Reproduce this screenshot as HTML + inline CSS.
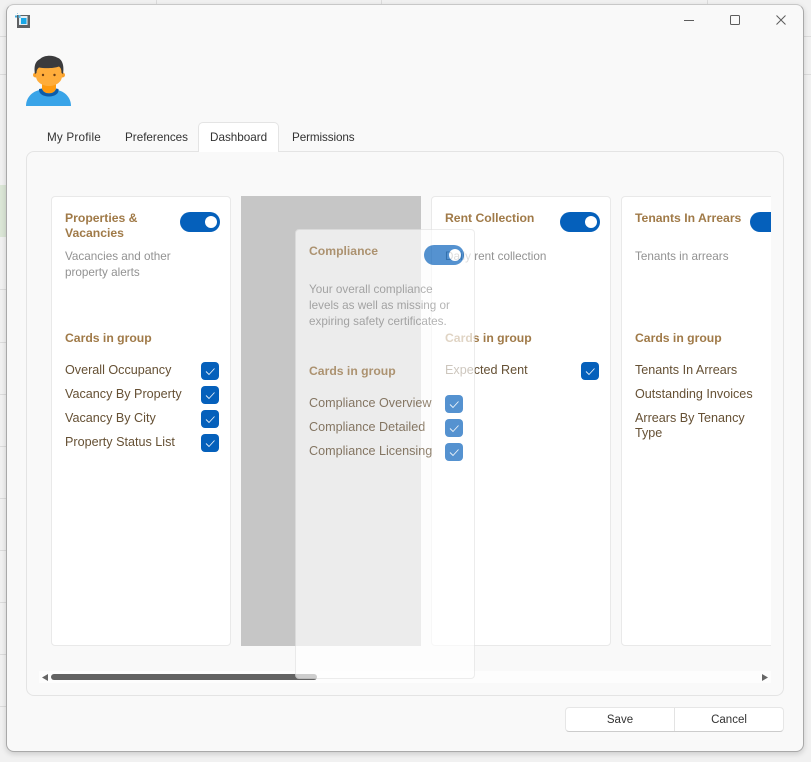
<!DOCTYPE html>
<html><head><meta charset="utf-8"><style>
*{box-sizing:border-box}
html,body{margin:0;padding:0}
body{width:811px;height:762px;overflow:hidden;position:relative;background:#f1f1f1;font-family:"Liberation Sans",sans-serif;font-size:12.5px}
.a{position:absolute}
.t{position:absolute;white-space:nowrap;line-height:16px}
.line{position:absolute;background:#dcdcdc}
#win{position:absolute;left:6px;top:4px;width:798px;height:748px;background:#f9f9f9;border:1px solid #a9a9a9;border-top-color:#c8c8c8;border-radius:8px;box-shadow:0 2px 6px rgba(0,0,0,.16)}
#panel{position:absolute;left:26px;top:151px;width:758px;height:545px;border:1px solid #e4e4e4;border-radius:8px;background:#f9f9f9}
.tab{color:#333;font-size:11.7px}
.card{position:absolute;top:196px;width:180px;height:450px;background:#fff;border:1px solid #e9e9e9;border-radius:4px}
.h{color:#a07a48;font-weight:bold;font-size:12.2px;line-height:15px}
.d{color:#929292;font-size:11.7px}
.i{color:#655034;font-size:12.6px}
.tg{position:absolute;width:40px;height:20px;border-radius:10px;background:#0560bb}
.tg:after{content:"";position:absolute;right:3px;top:4px;width:12px;height:12px;border-radius:50%;background:#fff}
.c{position:absolute;width:18px;height:18px;border-radius:4px;background:#0560bb}
.c svg{position:absolute;left:0;top:0}
.c path{stroke:rgba(255,255,255,.9);stroke-width:.9}
</style></head><body>
<div class="line" style="left:156px;top:0;width:1px;height:4px"></div>
<div class="line" style="left:381px;top:0;width:1px;height:4px"></div>
<div class="line" style="left:707px;top:0;width:1px;height:4px"></div>
<div class="line" style="left:0;top:36px;width:6px;height:1px"></div>
<div class="line" style="left:0;top:74px;width:6px;height:1px"></div>
<div class="line" style="left:804px;top:36px;width:7px;height:1px"></div>
<div class="line" style="left:804px;top:74px;width:7px;height:1px"></div>
<div class="a" style="left:0;top:185px;width:6px;height:52px;background:#dbe6d6"></div>
<div class="line" style="left:0;top:289px;width:6px;height:1px"></div>
<div class="line" style="left:0;top:342px;width:6px;height:1px"></div>
<div class="line" style="left:0;top:394px;width:6px;height:1px"></div>
<div class="line" style="left:0;top:446px;width:6px;height:1px"></div>
<div class="line" style="left:0;top:498px;width:6px;height:1px"></div>
<div class="line" style="left:0;top:550px;width:6px;height:1px"></div>
<div class="line" style="left:0;top:602px;width:6px;height:1px"></div>
<div class="line" style="left:0;top:654px;width:6px;height:1px"></div>
<div class="line" style="left:0;top:706px;width:6px;height:1px"></div>
<div id="win"></div>

<svg class="a" style="left:14px;top:12px" width="18" height="18" viewBox="0 0 18 18">
<rect x="3" y="3" width="13" height="13" fill="#5f6163"/><rect x="5" y="4" width="8.500" height="9" fill="#e4eef3"/><rect x="7" y="6" width="5.500" height="6" fill="#19a7e6"/><rect x="1" y="3.500" width="2" height="2" fill="#3fa9dc"/><rect x="3" y="1" width="1" height="1" fill="#9ccbe3"/><rect x="4.500" y="3" width="2" height="3" fill="#5fbde8"/>
</svg>
<svg class="a" style="left:680px;top:10px" width="110" height="20" viewBox="0 0 110 20" fill="none" stroke="#5c5c5c" stroke-width="1">
<path d="M4 10.500H14"/><rect x="50.500" y="5.500" width="9" height="9" rx="1"/><path d="M96.500 5.500L105.500 14.500M105.500 5.500L96.500 14.500"/>
</svg>

<svg class="a" style="left:26px;top:55px" width="46" height="51" viewBox="0 0 46 51">
<path d="M0 51C0 42 7 36 14 35H31C38 36 45 42 45 51Z" fill="#39a4e8"/>
<path d="M16 28H30V33.500C29 40 17 40 16 33.500Z" fill="#ff9a0e"/>
<path d="M13 34L16 33.500C17 40 29 40 30 33.500L32.500 34C34 44 12 44 13 34Z" fill="#0d5ca8"/>
<circle cx="9.500" cy="20" r="2.500" fill="#f9a12b"/><circle cx="36.500" cy="20" r="2.500" fill="#f9a12b"/>
<path d="M10 9H36V21C36 27 30 31 23 31C16 31 10 27 10 21Z" fill="#ffad3b"/>
<path d="M9 19C7.500 10 10 6 14 4C18 0 27 0 31 2.500C36 4 38.500 10 37 19L35.500 18C35.500 15 35 13 33 11.500C28 13.500 18 13.500 13 12.500C11 14 10.500 16 10.500 18Z" fill="#3b3b3d"/>
<circle cx="17" cy="20" r="1.200" fill="#6b3d12"/><circle cx="28.500" cy="20" r="1.200" fill="#6b3d12"/>
</svg>

<div id="panel"></div>
<div class="a" style="left:198px;top:122px;width:81px;height:30px;background:#fff;border:1px solid #e4e4e4;border-bottom:0;border-radius:5px 5px 0 0"></div>
<div class="t tab" style="left:47px;top:130px;letter-spacing:.2px">My Profile</div>
<div class="t tab" style="left:125px;top:130px">Preferences</div>
<div class="t tab" style="left:210px;top:130px">Dashboard</div>
<div class="t tab" style="left:292px;top:130px;letter-spacing:-.1px">Permissions</div>

<!-- card 1 -->
<div class="card" style="left:51px"></div>
<div class="t h" style="left:65px;top:211px">Properties &amp;<br>Vacancies</div>
<div class="tg" style="left:180px;top:212px"></div>
<div class="t d" style="left:65px;top:249px">Vacancies and other</div>
<div class="t d" style="left:65px;top:265px">property alerts</div>
<div class="t h" style="left:65px;top:331px">Cards in group</div>
<div class="t i" style="left:65px;top:362px">Overall Occupancy</div>
<div class="t i" style="left:65px;top:386px">Vacancy By Property</div>
<div class="t i" style="left:65px;top:410px">Vacancy By City</div>
<div class="t i" style="left:65px;top:434px">Property Status List</div>
<div class="c" style="left:201px;top:362px"><svg width="18" height="18" fill="none"><path d="M5 9.500L8 12.500L13.500 6.500"/></svg></div>
<div class="c" style="left:201px;top:386px"><svg width="18" height="18" fill="none"><path d="M5 9.500L8 12.500L13.500 6.500"/></svg></div>
<div class="c" style="left:201px;top:410px"><svg width="18" height="18" fill="none"><path d="M5 9.500L8 12.500L13.500 6.500"/></svg></div>
<div class="c" style="left:201px;top:434px"><svg width="18" height="18" fill="none"><path d="M5 9.500L8 12.500L13.500 6.500"/></svg></div>

<!-- placeholder -->
<div class="a" style="left:241px;top:196px;width:180px;height:450px;background:#c6c6c6"></div>

<!-- card 3 -->
<div class="card" style="left:431px"></div>
<div class="t h" style="left:445px;top:211px">Rent Collection</div>
<div class="tg" style="left:560px;top:212px"></div>
<div class="t d" style="left:445px;top:249px">Daily rent collection</div>
<div class="t h" style="left:445px;top:331px">Cards in group</div>
<div class="t i" style="left:445px;top:362px">Expected Rent</div>
<div class="c" style="left:581px;top:362px"><svg width="18" height="18" fill="none"><path d="M5 9.500L8 12.500L13.500 6.500"/></svg></div>

<!-- card 4 clipped -->
<div class="a" style="left:621px;top:196px;width:150px;height:450px;overflow:hidden">
<div class="a" style="left:0;top:0;width:180px;height:450px;background:#fff;border:1px solid #e9e9e9;border-radius:4px"></div>
<div class="t h" style="left:14px;top:15px">Tenants In Arrears</div>
<div class="tg" style="left:129px;top:16px"></div>
<div class="t d" style="left:14px;top:53px">Tenants in arrears</div>
<div class="t h" style="left:14px;top:135px">Cards in group</div>
<div class="t i" style="left:14px;top:166px">Tenants In Arrears</div>
<div class="t i" style="left:14px;top:190px">Outstanding Invoices</div>
<div class="t i" style="left:14px;top:214px">Arrears By Tenancy</div>
<div class="t i" style="left:14px;top:229px">Type</div>
</div>

<!-- scrollbar -->
<div class="a" style="left:39px;top:671px;width:732px;height:12px;background:#fdfdfd"></div>
<svg class="a" style="left:41px;top:673px" width="8" height="9"><path d="M7 1V8L1 4.500Z" fill="#666"/></svg>
<svg class="a" style="left:761px;top:673px" width="8" height="9"><path d="M1 1V8L7 4.500Z" fill="#666"/></svg>
<div class="a" style="left:51px;top:674px;width:266px;height:6px;border-radius:3px;background:#636363"></div>

<!-- dragged ghost -->
<div class="a" style="left:295px;top:229px;width:180px;height:450px;opacity:.68;background:#fff;border:1px solid #e4e4e4;border-radius:4px">
<div class="t h" style="left:13px;top:14px">Compliance</div>
<div class="tg" style="left:128px;top:15px"></div>
<div class="t d" style="left:13px;top:52px">Your overall compliance</div>
<div class="t d" style="left:13px;top:68px">levels as well as missing or</div>
<div class="t d" style="left:13px;top:84px">expiring safety certificates.</div>
<div class="t h" style="left:13px;top:134px">Cards in group</div>
<div class="t i" style="left:13px;top:165px">Compliance Overview</div>
<div class="t i" style="left:13px;top:189px">Compliance Detailed</div>
<div class="t i" style="left:13px;top:213px">Compliance Licensing</div>
<div class="c" style="left:149px;top:165px"><svg width="18" height="18" fill="none"><path d="M5 9.500L8 12.500L13.500 6.500"/></svg></div>
<div class="c" style="left:149px;top:189px"><svg width="18" height="18" fill="none"><path d="M5 9.500L8 12.500L13.500 6.500"/></svg></div>
<div class="c" style="left:149px;top:213px"><svg width="18" height="18" fill="none"><path d="M5 9.500L8 12.500L13.500 6.500"/></svg></div>
</div>

<!-- buttons -->
<div class="a" style="left:565px;top:707px;width:219px;height:25px;background:#fff;border:1px solid #e6e6e6;border-bottom-color:#cccccc;border-radius:4px"></div>
<div class="a" style="left:674px;top:708px;width:1px;height:23px;background:#e3e3e3"></div>
<div class="t" style="left:565px;width:110px;text-align:center;top:712px;font-size:11.500px;color:#333">Save</div>
<div class="t" style="left:674px;width:110px;text-align:center;top:712px;font-size:11.500px;color:#333">Cancel</div>
</body></html>
